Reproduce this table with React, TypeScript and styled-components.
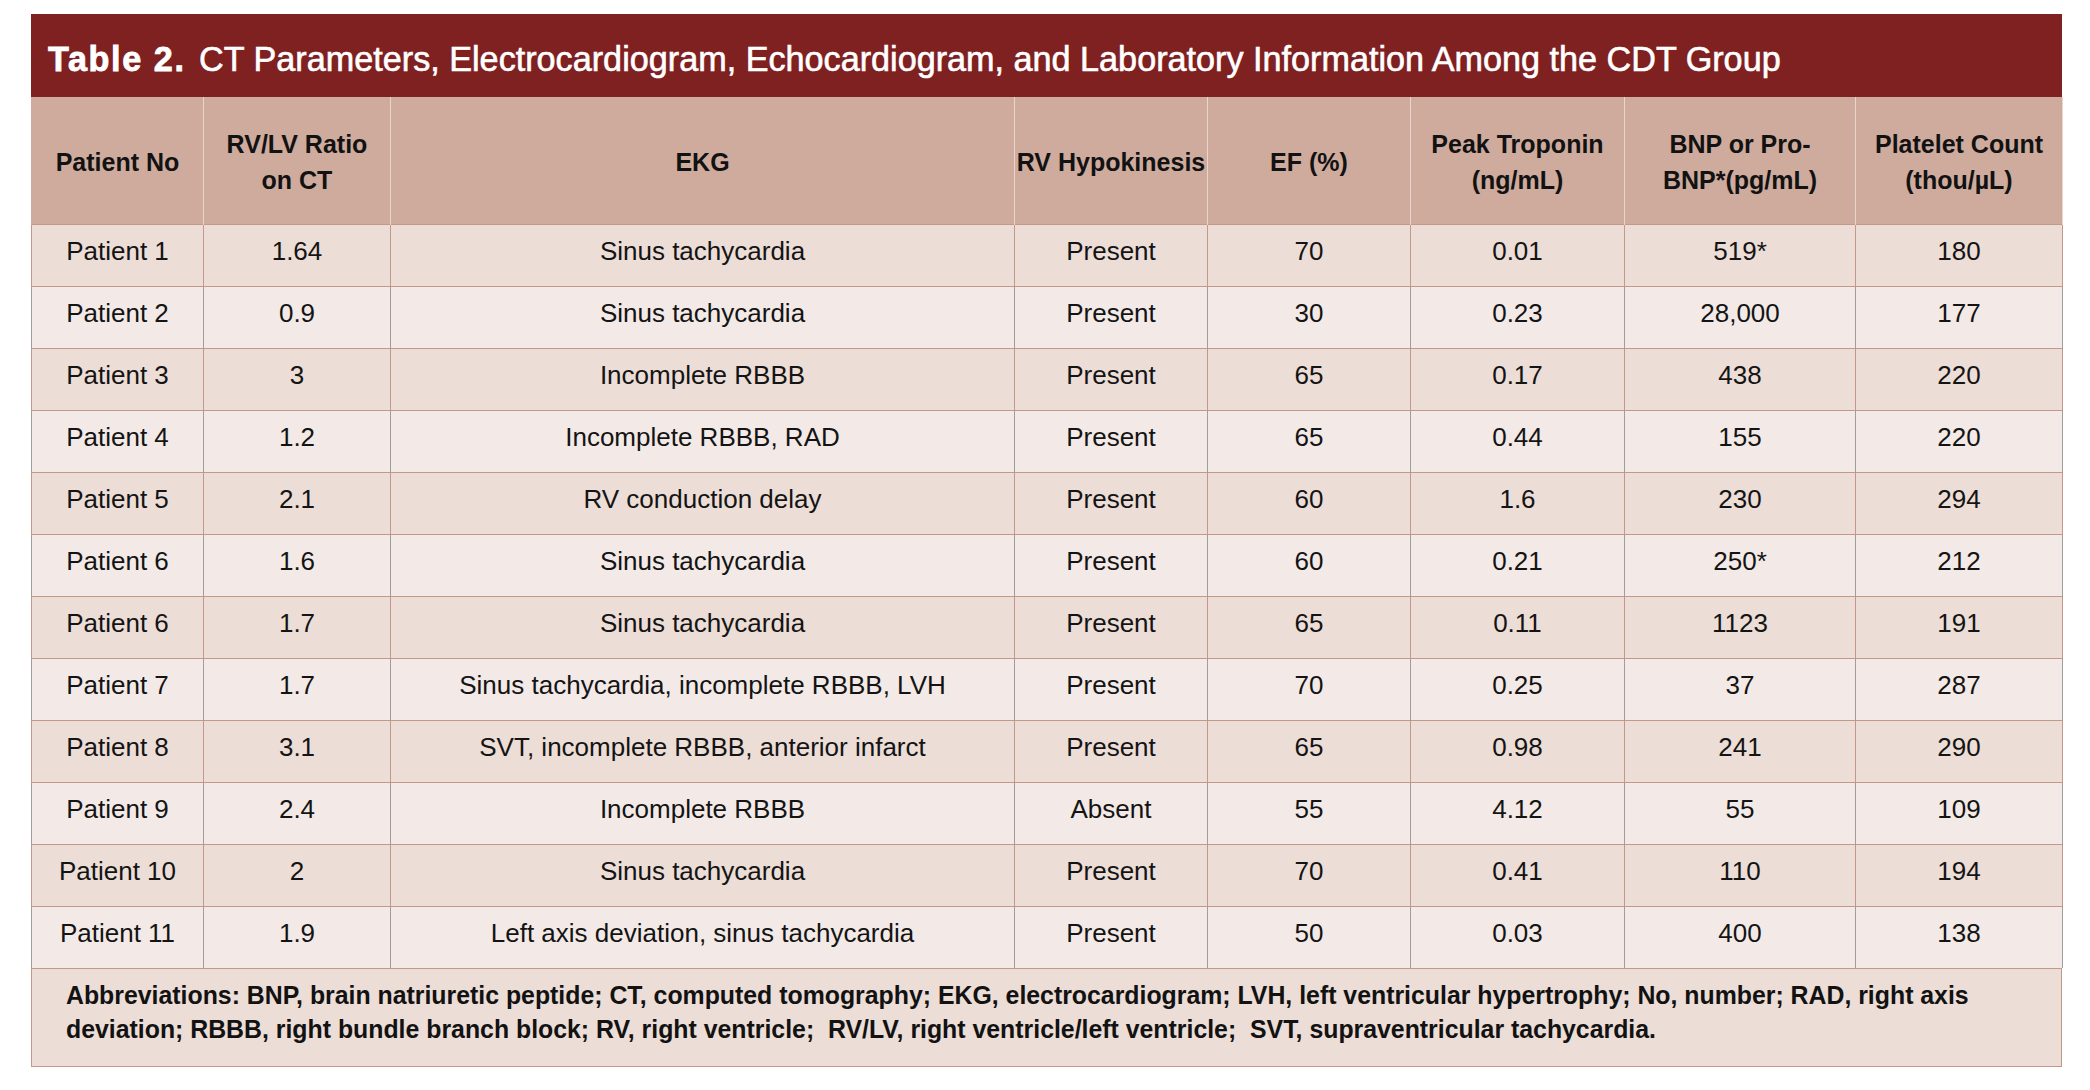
import React from "react";
import styled, {createGlobalStyle} from "styled-components";

const GlobalStyle = createGlobalStyle`
    html, body{
        margin: 0;
        padding: 0;
        background: #ffffff;
    }
    body{
        font-family: "Liberation Sans", Arial, sans-serif;
        color: #141414;
    }
`

const Page = styled.div`
    padding: 14px 0 0 31px;
`

const Frame = styled.section`
    width: 2031px;
`

const TitleBar = styled.h2`
    margin: 0;
    height: 83px;
    box-sizing: border-box;
    padding: 25px 17px 0 17px;
    background-color: #7f2121;
    color: #ffffff;
    font-size: 34.2px;
    line-height: 40px;
    font-weight: 400;
    -webkit-text-stroke: 0.6px #ffffff;
    white-space: nowrap;
    strong{
        font-weight: 700;
        letter-spacing: 1.6px;
        -webkit-text-stroke: 0.8px #ffffff;
        margin-right: 4px;
    }
`

const Table = styled.table`
    width: 2031px;
    border-collapse: collapse;
    table-layout: fixed;
`

const HeadCell = styled.th`
    height: 127px;
    box-sizing: border-box;
    padding: 4px 0 0 0;
    background-color: #cfab9d;
    color: #121212;
    font-size: 25px;
    line-height: 36px;
    font-weight: 700;
    text-align: center;
    vertical-align: middle;
    white-space: nowrap;
    border-left: 1px solid #e8d5cd;
    &:first-child{
        border-left: 1px solid #cfab9d;
    }
    &:last-child{
        border-right: 1px solid #e8d5cd;
    }
`

const Row = styled.tr<{$light: boolean}>`
    background-color: ${p => p.$light ? "#f3eae7" : "#ecddd6"};
    td{
        border-left: 1px solid ${p => p.$light ? "#a09d9c" : "#c49888"};
    }
    td:last-child{
        border-right: 1px solid ${p => p.$light ? "#a09d9c" : "#c49888"};
    }
`

const Cell = styled.td`
    height: 62px;
    box-sizing: border-box;
    padding: 0 4px 8px 4px;
    border-top: 1px solid #c49888;
    font-size: 26px;
    line-height: 30px;
    text-align: center;
    vertical-align: middle;
    white-space: nowrap;
`

const Footnote = styled.p`
    margin: 0;
    padding: 10px 20px 19px 34px;
    background-color: #ecddd6;
    border: 1px solid #c49888;
    font-size: 24.85px;
    line-height: 34px;
    font-weight: 700;
    color: #121212;
    white-space: nowrap;
`

const widths = [172, 187, 624, 193, 203, 214, 231, 207];

const heads: React.ReactNode[] = [
    "Patient No",
    <>RV/LV Ratio<br/>on CT</>,
    "EKG",
    "RV Hypokinesis",
    "EF (%)",
    <>Peak Troponin<br/>(ng/mL)</>,
    <>BNP or Pro-<br/>BNP*(pg/mL)</>,
    <>Platelet Count<br/>(thou/µL)</>,
];

const rows: string[][] = [
    ["Patient 1", "1.64", "Sinus tachycardia", "Present", "70", "0.01", "519*", "180"],
    ["Patient 2", "0.9", "Sinus tachycardia", "Present", "30", "0.23", "28,000", "177"],
    ["Patient 3", "3", "Incomplete RBBB", "Present", "65", "0.17", "438", "220"],
    ["Patient 4", "1.2", "Incomplete RBBB, RAD", "Present", "65", "0.44", "155", "220"],
    ["Patient 5", "2.1", "RV conduction delay", "Present", "60", "1.6", "230", "294"],
    ["Patient 6", "1.6", "Sinus tachycardia", "Present", "60", "0.21", "250*", "212"],
    ["Patient 6", "1.7", "Sinus tachycardia", "Present", "65", "0.11", "1123", "191"],
    ["Patient 7", "1.7", "Sinus tachycardia, incomplete RBBB, LVH", "Present", "70", "0.25", "37", "287"],
    ["Patient 8", "3.1", "SVT, incomplete RBBB, anterior infarct", "Present", "65", "0.98", "241", "290"],
    ["Patient 9", "2.4", "Incomplete RBBB", "Absent", "55", "4.12", "55", "109"],
    ["Patient 10", "2", "Sinus tachycardia", "Present", "70", "0.41", "110", "194"],
    ["Patient 11", "1.9", "Left axis deviation, sinus tachycardia", "Present", "50", "0.03", "400", "138"],
];

const App = () => {
    return (
        <Page>
            <GlobalStyle/>
            <Frame>
                <TitleBar>
                    <strong>Table 2.</strong> CT Parameters, Electrocardiogram, Echocardiogram, and Laboratory Information Among the CDT Group
                </TitleBar>
                <Table>
                    <colgroup>
                        {widths.map((w, i) => <col key={i} style={{width: w}}/>)}
                    </colgroup>
                    <thead>
                        <tr>
                            {heads.map((h, i) => <HeadCell key={i}>{h}</HeadCell>)}
                        </tr>
                    </thead>
                    <tbody>
                        {rows.map((r, i) => (
                            <Row key={i} $light={i % 2 === 1}>
                                {r.map((v, j) => <Cell key={j}>{v}</Cell>)}
                            </Row>
                        ))}
                    </tbody>
                </Table>
                <Footnote>
                    Abbreviations: BNP, brain natriuretic peptide; CT, computed tomography; EKG, electrocardiogram; LVH, left ventricular hypertrophy; No, number; RAD, right axis
                    <br/>
                    deviation; RBBB, right bundle branch block; RV, right ventricle;{"\u00a0 "}RV/LV, right ventricle/left ventricle;{"\u00a0 "}SVT, supraventricular tachycardia.
                </Footnote>
            </Frame>
        </Page>
    )
}

export default App;
